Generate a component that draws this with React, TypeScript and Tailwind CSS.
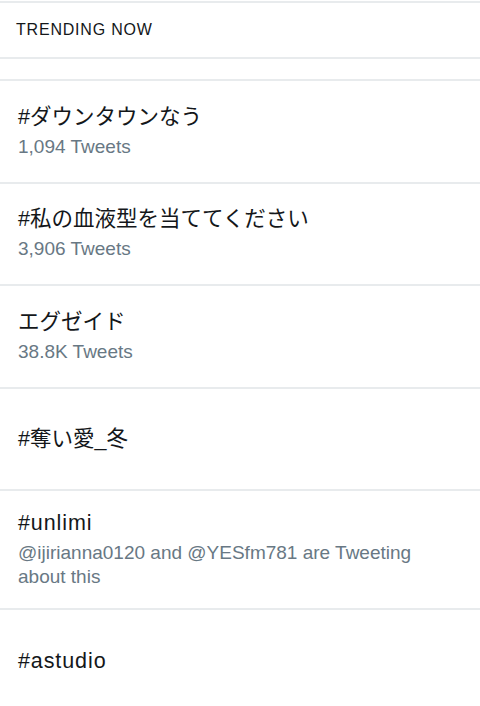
const trends = [
  { name: '#ダウンタウンなう', meta: '1,094 Tweets' },
  { name: '#私の血液型を当ててください', meta: '3,906 Tweets' },
  { name: 'エグゼイド', meta: '38.8K Tweets' },
  { name: '#奪い愛_冬' },
  { name: '#unlimi', meta: '@ijirianna0120 and @YESfm781 are Tweeting about this' },
  { name: '#astudio' },
]

const font = { fontFamily: '"Liberation Sans", "Noto Sans CJK JP", sans-serif' }

// latin-only names get a little tracking so they read as wide as the iOS font
const isLatin = (s: string) => /^[\x00-\x7f]+$/.test(s)

export default function App() {
  return (
    <div className="min-h-screen bg-white pt-px" style={font}>
      <div className="h-[54px] flex items-center px-4 border-t-2 border-b-2 border-[#e8ebed] box-content">
        <span className="text-[16px] tracking-[0.8px] text-[#14171a]">TRENDING NOW</span>
      </div>
      <div className="h-[20px] border-b-2 border-[#e8ebed] box-content" />
      {trends.map((t) => (
        <div
          key={t.name}
          className="min-h-[102.6px] flex flex-col justify-center gap-[5px] py-[19px] pl-[18px] pr-12 border-b-2 border-[#e8ebed]"
        >
          <div
            className={
              isLatin(t.name)
                ? 'text-[21.5px] leading-[26px] tracking-[0.9px] text-[#14171a]'
                : 'text-[21.5px] leading-[26px] text-[#14171a]'
            }
          >
            {t.name}
          </div>
          {t.meta && <div className="text-[19px] leading-[24px] text-[#687884]">{t.meta}</div>}
        </div>
      ))}
    </div>
  )
}
